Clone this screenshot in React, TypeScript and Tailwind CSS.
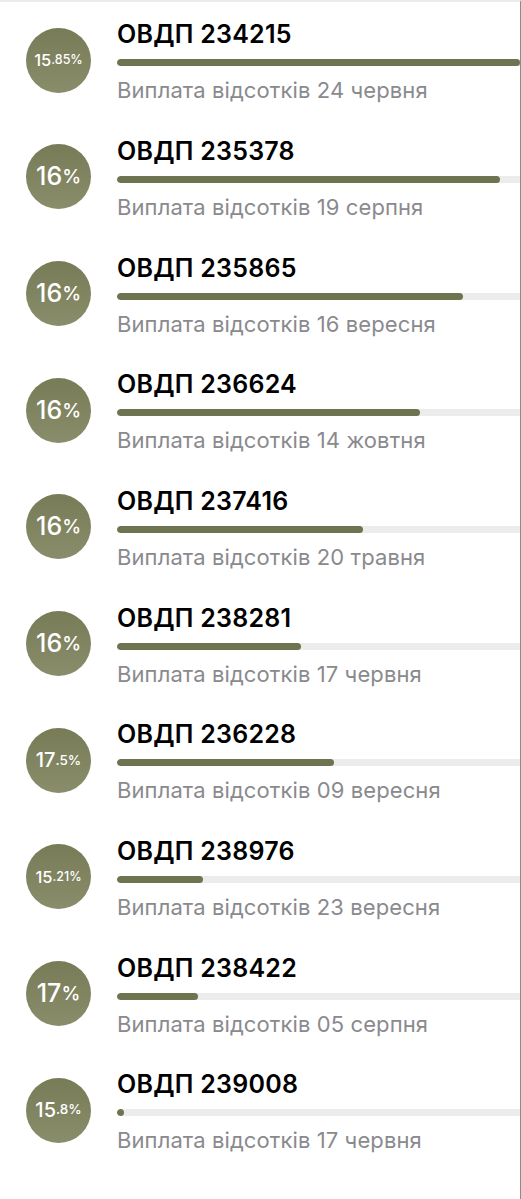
import React from "react";

type Item = { code: string; rate: string; date: string; fill: number };

const items: Item[] = [
  { code: "234215", rate: "15.85", date: "24 червня", fill: 403 },
  { code: "235378", rate: "16", date: "19 серпня", fill: 383 },
  { code: "235865", rate: "16", date: "16 вересня", fill: 346 },
  { code: "236624", rate: "16", date: "14 жовтня", fill: 303 },
  { code: "237416", rate: "16", date: "20 травня", fill: 246 },
  { code: "238281", rate: "16", date: "17 червня", fill: 184 },
  { code: "236228", rate: "17.5", date: "09 вересня", fill: 217 },
  { code: "238976", rate: "15.21", date: "23 вересня", fill: 86 },
  { code: "238422", rate: "17", date: "05 серпня", fill: 81 },
  { code: "239008", rate: "15.8", date: "17 червня", fill: 7 },
];

function Rate({ rate }: { rate: string }) {
  const [int, dec] = rate.split(".");
  const small = (dec ? "." + dec : "") + "%";
  let bigCls = "text-[25px]";
  let smallCls = "text-[19px]";
  if (rate.length === 4) {
    bigCls = "text-[20px]";
    smallCls = "text-[13.5px]";
  } else if (rate.length === 5) {
    bigCls = "text-[16.5px]";
    smallCls = "text-[12.5px]";
  }
  return (
    <div className="w-[65px] h-[65px] shrink-0 rounded-full bg-gradient-to-b from-[#777b56] to-[#8a8d6b] flex items-center justify-center text-white font-medium leading-none">
      <span className={bigCls}>{int}</span>
      <span className={smallCls}>{small}</span>
    </div>
  );
}

export default function App() {
  return (
    <div
      className="w-[521px] h-[1199px] bg-white border-t-2 border-t-[#ececec] border-r border-r-[#8c8c8c] overflow-hidden"
      style={{ fontFamily: "Inter, 'Noto Sans', sans-serif" }}
    >
      {items.map((it) => (
        <div key={it.code} className="h-[116.67px] flex items-center pl-[26px]">
          <Rate rate={it.rate} />
          <div className="flex-1 flex flex-col pl-[26px] pt-[3px]">
            <div className="text-[25px] leading-[28px] font-semibold tracking-[0.25px] text-black">ОВДП {it.code}</div>
            <div className="mt-[11px] h-[7px] rounded-l-full bg-[#ececec] overflow-hidden">
              <div className="h-full rounded-full bg-[#6e7350]" style={{ width: it.fill }} />
            </div>
            <div className="mt-[11px] text-[22px] leading-[26px] tracking-[0.1px] text-[#8a8a8e]">
              Виплата відсотків {it.date}
            </div>
          </div>
        </div>
      ))}
    </div>
  );
}
